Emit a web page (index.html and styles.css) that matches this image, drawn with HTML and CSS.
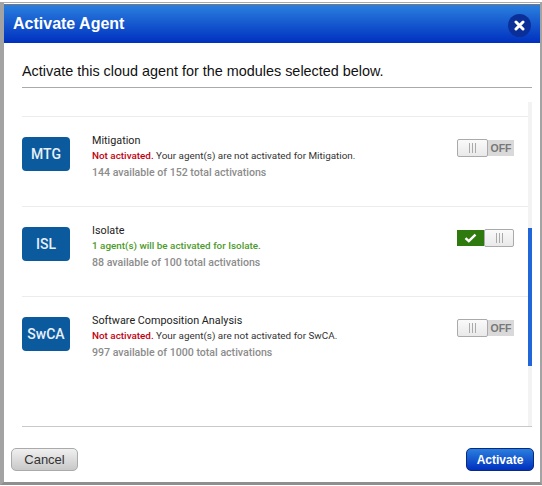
FILE: index.html
```html
<!DOCTYPE html>
<html lang="en">
<head>
    <meta charset="UTF-8">
    <meta name="viewport" content="width=device-width, initial-scale=1.0">
    <title>Activate Agent</title>
    <link rel="stylesheet" href="styles.css">
</head>
<body>

<div class="dialog">
    <header class="dialog-header">
        <h1>Activate Agent</h1>
        <button class="close-btn" aria-label="Close">
            <svg width="11" height="11" viewBox="0 0 11 11"><path d="M2 2 L9 9 M9 2 L2 9" stroke="#fff" stroke-width="3" stroke-linecap="round"/></svg>
        </button>
    </header>

    <p class="intro">Activate this cloud agent for the modules selected below.</p>

    <div class="module-list">
        <div class="module-row">
            <div class="badge">MTG</div>
            <div class="module-info">
                <div class="module-name">Mitigation</div>
                <div class="module-status"><span class="not-active">Not activated.</span> Your agent(s) are not activated for Mitigation.</div>
                <div class="module-count">144 available of 152 total activations</div>
            </div>
            <div class="toggle">
                <div class="knob"><i></i><i></i><i></i></div>
                <div class="toggle-off">OFF</div>
            </div>
        </div>
        <div class="module-row">
            <div class="badge">ISL</div>
            <div class="module-info">
                <div class="module-name">Isolate</div>
                <div class="module-status will-activate">1 agent(s) will be activated for Isolate.</div>
                <div class="module-count">88 available of 100 total activations</div>
            </div>
            <div class="toggle">
                <div class="toggle-on">
                    <svg width="13" height="10" viewBox="0 0 13 10"><path d="M1.5 5.2 L4.8 8.2 L11.5 1.6" fill="none" stroke="#fff" stroke-width="2.4"/></svg>
                </div>
                <div class="knob knob-on"><i></i><i></i><i></i></div>
            </div>
        </div>
        <div class="module-row">
            <div class="badge">SwCA</div>
            <div class="module-info">
                <div class="module-name">Software Composition Analysis</div>
                <div class="module-status"><span class="not-active">Not activated.</span> Your agent(s) are not activated for SwCA.</div>
                <div class="module-count">997 available of 1000 total activations</div>
            </div>
            <div class="toggle">
                <div class="knob"><i></i><i></i><i></i></div>
                <div class="toggle-off">OFF</div>
            </div>
        </div>
        <!-- Scrollbar -->
        <div class="scroll-track"><div class="scroll-thumb"></div></div>
    </div>

    <footer class="dialog-footer">
        <button class="btn btn-cancel">Cancel</button>
        <button class="btn btn-activate">Activate</button>
    </footer>
</div>

</body>
</html>
```

FILE: styles.css
```css
html, body {
    margin: 0;
    background-color: #fff;
    overflow: hidden;
}

body {
    height: 486px;
    font-family: "Liberation Sans", Arial, sans-serif;
}

.dialog {
    box-sizing: border-box;
    display: flex;
    flex-direction: column;
    height: 483px;
    margin-top: 2px;
    padding-top: 1px;
    background-color: #fff;
    border-top: 1px solid #aaa;
    border-left: 4px solid #a3a3a3;
    border-right: 2px solid #a3a3a3;
    border-bottom: 3px solid #8f8f8f;
}

.dialog-header {
    box-sizing: border-box;
    flex: none;
    height: 39px;
    display: flex;
    justify-content: space-between;
    align-items: center;
    padding: 0 9px 1px 9px;
    background: linear-gradient(to bottom, #2a7fde, #0030bf);
    border-top: 1px solid #777;
}

.dialog-header h1 {
    margin: 0;
    font-size: 16px;
    font-weight: bold;
    color: #fff;
}

.close-btn {
    width: 23px;
    height: 23px;
    padding: 0;
    margin-top: 4px;
    display: flex;
    align-items: center;
    justify-content: center;
    border: none;
    border-radius: 50%;
    background-color: #0b2f98;
}

.intro {
    flex: none;
    box-sizing: border-box;
    height: 45px;
    margin: 0 8px 0 18px;
    padding-top: 20px;
    font-size: 14.4px;
    line-height: 16px;
    color: #111;
    border-bottom: 1px solid #aaa;
}

.module-list {
    position: relative;
    box-sizing: border-box;
    flex: none;
    height: 339px;
    margin: 0 8px 0 18px;
    padding: 28px 4px 0 0;
    border-bottom: 1px solid #c8c8c8;
}

.module-row {
    box-sizing: border-box;
    height: 90px;
    display: flex;
    align-items: flex-start;
    border-top: 1px solid #ececec;
    padding-top: 20px;
}

.module-row:last-of-type {
    height: 91px;
    border-bottom: 1px solid #ececec;
}

.badge {
    flex: none;
    width: 48px;
    height: 34px;
    display: flex;
    align-items: center;
    justify-content: center;
    border-radius: 4px;
    background-color: #0b5a9e;
    color: #e8f0f8;
    font-family: Roboto, sans-serif;
    font-size: 14px;
    font-weight: 500;
}

.module-info {
    flex: 1;
    margin-left: 22px;
    margin-top: -4px;
    font-family: Roboto, sans-serif;
}

.module-name {
    font-size: 10.8px;
    line-height: 15px;
    color: #222;
}

.module-status {
    font-size: 9.9px;
    line-height: 15px;
    color: #333;
}

.not-active {
    color: #c00010;
    font-weight: 500;
}

.will-activate {
    color: #4c9a2a;
    font-weight: 500;
}

.module-count {
    font-size: 10.6px;
    line-height: 19px;
    font-weight: 500;
    color: #8c8c8c;
}

/* Toggle switch */
.toggle {
    flex: none;
    width: 57px;
    height: 18px;
    display: flex;
    align-items: center;
    margin-top: 2px;
    margin-right: 14px;
}

.knob {
    box-sizing: border-box;
    flex: none;
    width: 31px;
    height: 18px;
    display: flex;
    align-items: center;
    justify-content: center;
    gap: 2px;
    border: 1px solid #aaa;
    border-radius: 2px;
    background: linear-gradient(to bottom, #fafafa, #e9e9e9);
}

.knob i {
    width: 1px;
    height: 10px;
    background-color: #aaa;
}

.knob-on {
    width: 30px;
}

.toggle-off {
    flex: 1;
    height: 16px;
    line-height: 16px;
    text-align: center;
    font-size: 10.5px;
    font-weight: bold;
    color: #777;
    background-color: #d9d9d9;
}

.toggle-on {
    flex: 1;
    height: 16px;
    display: flex;
    align-items: center;
    justify-content: center;
    background-color: #2f7a0e;
}

.scroll-track {
    position: absolute;
    top: 14px;
    bottom: 0;
    right: 0;
    width: 4px;
    background-color: #f3f3f3;
}

.scroll-thumb {
    height: 138px;
    margin-top: 126px;
    background-color: #2166d8;
}

.dialog-footer {
    flex: 1;
    display: flex;
    justify-content: space-between;
    align-items: flex-start;
    padding: 21px 6px 0 7px;
}

.btn {
    box-sizing: border-box;
    height: 23px;
    padding: 0;
    font-family: "Liberation Sans", Arial, sans-serif;
    font-size: 12px;
    font-weight: bold;
    border-radius: 5px;
}

.btn-cancel {
    width: 67px;
    font-size: 13px;
    font-weight: normal;
    color: #333;
    border: 1px solid #aaa;
    background: linear-gradient(to bottom, #f0f0f0, #c8c8c8);
}

.btn-activate {
    width: 68px;
    color: #fff;
    border: 1px solid #0a2a80;
    background: linear-gradient(to bottom, #2a7fde, #0030bf);
}
```
